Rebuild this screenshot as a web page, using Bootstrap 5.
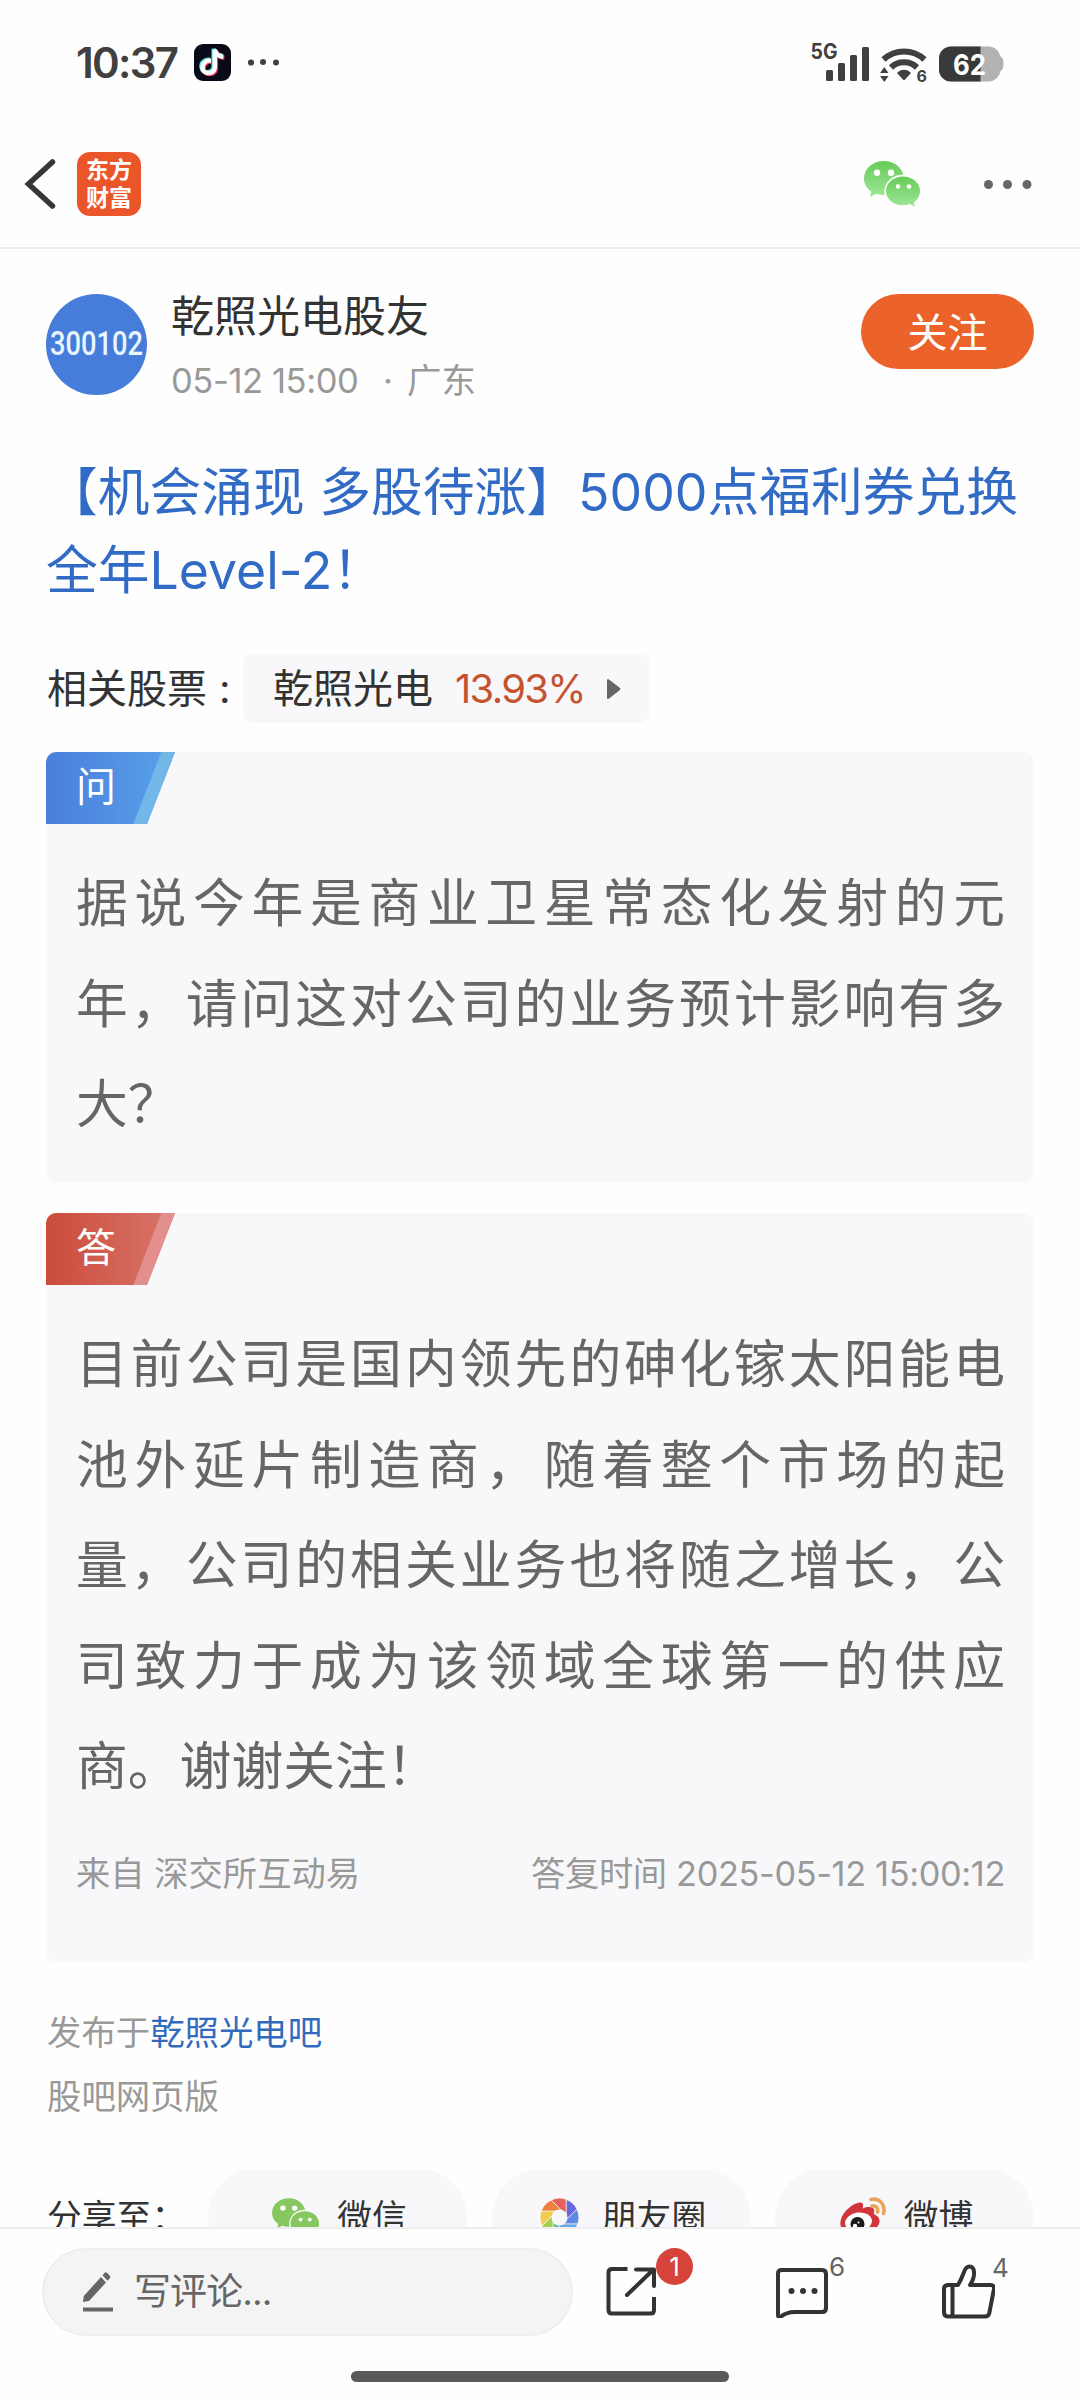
<!DOCTYPE html>
<html lang="zh-CN">
<head>
<meta charset="utf-8">
<meta name="viewport" content="width=device-width, initial-scale=1">
<title>乾照光电吧</title>
<link rel="stylesheet" href="https://cdn.jsdelivr.net/npm/bootstrap@5.3.0/dist/css/bootstrap.min.css">
<style>
  body { background: #fefefe; color: #333; font-family: Inter, "Noto Sans CJK SC", sans-serif; font-size: 34.5px; }
  svg { display: block; flex: none; }
  .screen { width: 1080px; height: 2400px; }
  .statusbar { height: 120px; padding: 6px 76px 0 76px; color: #404040; }
  .clock { font-size: 42px; font-weight: 600; line-height: 50px; width: 118px; letter-spacing: -1.7px; white-space: nowrap; }
  .topnav { height: 129px; border-bottom: 2px solid #eee; padding: 0 46px 0 24px; }
  .applogo { width: 64px; height: 64px; margin-left: 21px; border-radius: 13px; background: #eb552a; color: #fff; font-size: 23px; font-weight: 700; line-height: 28px; padding-top: 4px; }
  .feed { padding: 45px 46px 0; min-height: 0; }
  .author { height: 101px; }
  .author-text { margin: -3px 0 0 24px; }
  .author-name { font-size: 43px; line-height: 50px; }
  .author-meta { font-size: 34.5px; line-height: 50px; margin-top: 15px; color: #999; white-space: pre; }
  .author-meta .when { display: inline-block; width: 212px; letter-spacing: -.4px; }
  .author-meta .place { margin-left: 14px; }
  .follow { width: 173px; height: 75px; border-radius: 38px; background: #ec622b; color: #fff; font-size: 40px; line-height: 77px; border: 0; padding: 0; }
  .headline { font-size: 51.75px; line-height: 78px; margin: 58px 0 0; font-weight: 400; color: #326bc6; white-space: nowrap; }
  .stocks { margin-top: 45px; height: 69px; font-size: 40px; line-height: 69px; white-space: nowrap; padding-left: 1px; }
  .stock-label { width: 196px; }
  .stock-label span { margin-left: 12px; }
  .chip { width: 407px; border-radius: 10px; background: #f8f8fa; padding-left: 30px; }
  .gain { color: #c55330; letter-spacing: -1.7px; width: 128px; margin-left: 22px; }
  .qa { background: #f8f8fb; border-radius: 10px; overflow: hidden; }
  .qa-ask { margin-top: 29px; height: 431px; }
  .qa-answer { margin-top: 30px; height: 749px; }
  .qa-tag { width: 129px; height: 72px; line-height: 70px; padding-left: 30px; color: #fff; font-size: 40px; clip-path: polygon(0 0, 129px 0, 101px 72px, 0 72px); }
  .qa-ask .qa-tag { background: linear-gradient(111.25deg, transparent 0 107px, #73b7e9 108px), linear-gradient(90deg, #497edb, #58a2ea); }
  .qa-answer .qa-tag { background: linear-gradient(111.25deg, transparent 0 107px, #e38f8d 108px), linear-gradient(90deg, #cb4c3b, #d9756b); }
  .qa-body { margin: 29px 29px 0 30px; font-size: 51.8px; line-height: 100.6px; text-align: justify; color: #666; }
  .qa-source { margin: 32px 29px 0 30px; line-height: 50px; color: #999; font-size: 34.3px; white-space: nowrap; }
  .qa-source .stamp { letter-spacing: -.35px; }
  .origin { margin-top: 39px; line-height: 64px; color: #999; font-size: 34.4px; padding-left: 1px; }
  .origin a { color: #326bbd; text-decoration: none; }
  .share { margin-top: 40px; height: 96px; line-height: 96px; font-size: 34.8px; padding-left: 1px; white-space: nowrap; }
  .share-label { width: 161px; }
  .share-pill { width: 259px; border-radius: 48px; background: #f8f8fb; padding-left: 4px; }
  .share-pill + .share-pill { margin-left: 24.5px; }
  .actionbar { height: 173px; border-top: 2px solid #eee; background: #fefefe; flex: none; }
  .actions { height: 88px; margin: 19px 0 0 42px; }
  .reply { width: 531px; height: 88px; border-radius: 44px; background: #f4f4f4; border: 2px solid #eee; color: #666; font-size: 37px; padding-left: 38px; }
  .act { width: 52px; margin-bottom: 3px; }
  .bubble { position: absolute; left: 51px; top: -17px; width: 37px; height: 37px; border-radius: 50%; background: #d5433a; color: #fff; font-size: 26px; line-height: 37px; text-align: center; }
  .tally { position: absolute; font-size: 26px; line-height: 28px; color: #666; }
  .homebar { width: 378px; height: 11px; border-radius: 6px; background: #595959; margin: 35px 0 0 351px; }
</style>
</head>
<body>
<svg width="0" height="0" class="position-absolute">
  <defs>
    <linearGradient id="wx" x1="0" y1="0" x2="0" y2="1"><stop offset="0" stop-color="#65cb57"/><stop offset="1" stop-color="#a0e799"/></linearGradient>
    <symbol id="wechat" viewBox="0 0 56 46">
      <path d="M20 0C9 0 0 7.500 0 17.500c0 5.500 2.800 10 7.400 13.200L5.800 36l6.500-3.200c2.500.8 5 1.200 8.300 1.100C19 22 28 13.500 39.500 13.800 37 5.500 29.500 0 20 0z"/>
      <path d="M39 15.500c-9.500 0-17 6.500-17 14.500s7.500 14.300 17 14.300c2.600 0 5-.4 7-1.200L51 46l-1.300-4.600C53.600 38.700 56 34.700 56 30c0-8-7.500-14.500-17-14.500z"/>
      <g fill="#fff"><circle cx="13" cy="11.800" r="3.200"/><circle cx="27" cy="11.800" r="3.200"/><circle cx="34" cy="25.500" r="2.300"/><circle cx="45" cy="25.500" r="2.300"/></g>
    </symbol>
  </defs>
</svg>

<div class="screen d-flex flex-column overflow-hidden">
  <header class="statusbar d-flex align-items-center flex-shrink-0">
    <div class="clock">10:37</div>
    <svg width="86" height="38" viewBox="0 0 86 38">
      <rect width="37" height="37" rx="9" fill="#080a17"/>
      <g fill="none" stroke-width="4.400">
        <path d="M16.800 16.500c-5.500-.6-9 3-8.500 7.500.8 6.700 12 6.600 12.200-.8V5.500c.8 4 4 6.600 8.500 7" stroke="#5de4e4" transform="translate(-.8 -.8)"/>
        <path d="M16.800 16.500c-5.500-.6-9 3-8.500 7.500.8 6.700 12 6.600 12.200-.8V5.500c.8 4 4 6.600 8.500 7" stroke="#ee3a5b" transform="translate(1.400 1.200)"/>
        <path d="M16.800 16.500c-5.500-.6-9 3-8.500 7.500.8 6.700 12 6.600 12.200-.8V5.500c.8 4 4 6.600 8.500 7" stroke="#fff" transform="translate(.3 .2)"/>
      </g>
      <g fill="#404040"><circle cx="57" cy="18.500" r="3.100"/><circle cx="69" cy="18" r="3"/><circle cx="82" cy="18.500" r="3"/></g>
    </svg>
    <svg class="ms-auto" width="198" height="44" viewBox="806 40 198 44" fill="#404040">
      <text x="810.500" y="57.500" font-size="21" font-weight="700" textLength="27" lengthAdjust="spacingAndGlyphs">5G</text>
      <rect x="826" y="69" width="7" height="11" rx="1.500"/><rect x="838" y="62" width="7" height="18" rx="1.500"/><rect x="850" y="54" width="7" height="26" rx="1.500"/><rect x="862" y="46" width="7" height="34" rx="1.500"/>
      <g fill="none" stroke="#404040" stroke-width="6"><path d="M883.500 58.500a30 30 0 0 1 41 0"/><path d="M891 66.500a19 19 0 0 1 26 0"/></g>
      <path d="M897 72a9 9 0 0 1 14 0l-6 6.500q-1 1-2 0zM884.300 66l4.200 6h-8.400zM884.300 81l4.200-6h-8.400z"/>
      <text x="916.500" y="81" font-size="16" font-weight="700">6</text>
      <path d="M951 45.500h37.500a12 12 0 0 1 12 10c4 .5 4 13.500 0 14.500a12 12 0 0 1-12 10.500H951a12 12 0 0 1-12-12v-11a12 12 0 0 1 12-12z" fill="#b2b2b2"/>
      <path d="M951 45.500h29.500v35H951a12 12 0 0 1-12-12v-11a12 12 0 0 1 12-12z" fill="#393939"/>
      <text x="953" y="73.500" font-size="29" font-weight="700" fill="#fff" textLength="33" lengthAdjust="spacingAndGlyphs">62</text>
    </svg>
  </header>

  <nav class="topnav d-flex align-items-center flex-shrink-0">
    <svg width="32" height="52" viewBox="0 0 32 52" fill="none" stroke="#363636" stroke-width="5.500" stroke-linecap="round"><path d="M28.500 4 4.500 26l24 22"/></svg>
    <div class="applogo text-center">东方<br>财富</div>
    <svg class="ms-auto" width="56" height="46" fill="url(#wx)"><use href="#wechat"/></svg>
    <svg width="50" height="12" viewBox="0 0 50 12" fill="#666" style="margin-left:64px"><circle cx="4.500" cy="6.500" r="4.500"/><circle cx="23.500" cy="6.500" r="4.500"/><circle cx="43" cy="6.500" r="4.500"/></svg>
  </nav>

  <main class="feed flex-grow-1 overflow-hidden">
    <section class="author d-flex">
      <svg width="101" height="101"><circle cx="50.500" cy="50.500" r="50.500" fill="#467dda"/><text x="4" y="61" font-family="Roboto" font-size="33.500" font-weight="500" fill="#e8f6ff" textLength="93" lengthAdjust="spacingAndGlyphs">300102</text></svg>
      <div class="author-text">
        <div class="author-name">乾照光电股友</div>
        <div class="author-meta"><span class="when">05-12 15:00</span>·<span class="place">广东</span></div>
      </div>
      <button class="follow btn ms-auto">关注</button>
    </section>

    <h1 class="headline">【机会涌现 多股待涨】5000点福利券兑换<br>全年Level-2！</h1>

    <section class="stocks d-flex">
      <div class="stock-label">相关股票<span>:</span></div>
      <div class="chip d-flex align-items-center">
        <span>乾照光电</span><span class="gain">13.93%</span>
        <svg class="ms-4" width="14" height="22" viewBox="0 0 14 22"><path d="M0 2.500Q0 0 2 1.500L13 10q1 1 0 2L2 20.500Q0 22 0 19.500z" fill="#666"/></svg>
      </div>
    </section>

    <article class="qa qa-ask">
      <div class="qa-tag">问</div>
      <p class="qa-body">据说今年是商业卫星常态化发射的元年，请问这对公司的业务预计影响有多大？</p>
    </article>

    <article class="qa qa-answer">
      <div class="qa-tag">答</div>
      <p class="qa-body">目前公司是国内领先的砷化镓太阳能电池外延片制造商，随着整个市场的起量，公司的相关业务也将随之增长，公司致力于成为该领域全球第一的供应商。谢谢关注！</p>
      <div class="qa-source d-flex justify-content-between"><span>来自 深交所互动易</span><span class="stamp">答复时间 2025-05-12 15:00:12</span></div>
    </article>

    <div class="origin">发布于<a href="#">乾照光电吧</a><br>股吧网页版</div>

    <section class="share d-flex">
      <div class="share-label">分享至：</div>
      <div class="share-pill d-flex align-items-center justify-content-center">
        <svg width="47" height="39" fill="#87c75f"><use href="#wechat"/></svg><span style="margin-left:18px">微信</span>
      </div>
      <div class="share-pill d-flex align-items-center justify-content-center">
        <svg width="39" height="39" viewBox="-19.500 -19.500 39 39" stroke="#f8f8fb" stroke-width=".7">
          <path d="M6.500 -18.200A19.300 19.300 0 0 1 17.500 -8.200L6.500 3z" fill="#6a6ade"/>
          <path d="M6.500 -18.200A19.300 19.300 0 0 1 17.500 -8.200L6.500 3z" fill="#5f87e4" transform="rotate(45)"/>
          <path d="M6.500 -18.200A19.300 19.300 0 0 1 17.500 -8.200L6.500 3z" fill="#65a9e3" transform="rotate(90)"/>
          <path d="M6.500 -18.200A19.300 19.300 0 0 1 17.500 -8.200L6.500 3z" fill="#63c6a0" transform="rotate(135)"/>
          <path d="M6.500 -18.200A19.300 19.300 0 0 1 17.500 -8.200L6.500 3z" fill="#a3cf55" transform="rotate(180)"/>
          <path d="M6.500 -18.200A19.300 19.300 0 0 1 17.500 -8.200L6.500 3z" fill="#f2cc4e" transform="rotate(225)"/>
          <path d="M6.500 -18.200A19.300 19.300 0 0 1 17.500 -8.200L6.500 3z" fill="#ec803c" transform="rotate(270)"/>
          <path d="M6.500 -18.200A19.300 19.300 0 0 1 17.500 -8.200L6.500 3z" fill="#e56059" transform="rotate(315)"/>
          <circle r="8" fill="#f8f8fb" stroke="none"/>
        </svg><span style="margin-left:23px">朋友圈</span>
      </div>
      <div class="share-pill d-flex align-items-center justify-content-center">
        <svg width="46" height="40" viewBox="0 0 46 40">
          <path d="M18 6c5-1.500 6 1.500 4.500 5.500 6-2.500 13-2 11.500 3.500-.4 1.600 0 2.300 1.500 3 6 2.800 5 10-1 14.500-9 7-25 6.500-31.500.5C-3 27 2 16 10 10c2.500-2 5-3.400 8-4z" fill="#d2353a"/>
          <ellipse cx="18.500" cy="25" rx="13.500" ry="9.500" fill="#fff" transform="rotate(-8 18.500 25)"/>
          <circle cx="17.500" cy="27" r="7" fill="#1b1b1b"/><circle cx="15" cy="29" r="2.200" fill="#fff"/><circle cx="18.500" cy="25.500" r="1" fill="#fff"/>
          <path d="M31 2.500c8-2 15 5 12.500 14M32 9c4-.6 6.500 2 5.500 6" fill="none" stroke="#e9a45c" stroke-width="3.600" stroke-linecap="round"/>
        </svg><span style="margin-left:18px">微博</span>
      </div>
    </section>
  </main>

  <footer class="actionbar">
    <div class="actions d-flex align-items-center">
      <div class="reply d-flex align-items-center">
        <svg width="32" height="42" viewBox="0 0 32 42" fill="#666"><path d="M1 31 1.800 25 19 6l5 5.500L7 30zM20.500 4.200 23 1.500q1-.8 2 .2l3 3.300q.8 1 0 2L25.500 9.700zM1 36.500h30v4H1z"/></svg>
        <span style="margin-left:20px;letter-spacing:-.9px">写评论...</span>
      </div>
      <div class="act position-relative" style="margin-left:32px">
        <svg width="52" height="52" viewBox="0 0 52 52" fill="none" stroke="#333" stroke-width="4" stroke-linecap="round" stroke-linejoin="round"><path d="M22.500 4H7Q3.500 4 3.500 7.500V45q0 3.500 3.500 3.500h39q3 0 3-3.500V32" stroke-linecap="butt"/><path d="M31 4.500h18V21M48 5 22 30"/></svg>
        <span class="bubble">1</span>
      </div>
      <div class="act position-relative" style="margin-left:118px">
        <svg width="54" height="54" viewBox="0 0 54 54" fill="none" stroke="#333" stroke-width="4" stroke-linecap="round" stroke-linejoin="round"><path d="M6.500 6H47q4 0 4 4v34q0 4-4 4H20c-6 0-10 1-14.500 5Q3 54 3 50.500V9.500Q3 6 6.500 6z"/><g fill="#333" stroke="none"><circle cx="16.500" cy="27" r="3"/><circle cx="28" cy="27" r="3"/><circle cx="39.500" cy="27" r="3"/></g></svg>
        <span class="tally" style="left:54px;top:-11px">6</span>
      </div>
      <div class="act position-relative" style="margin-left:114px">
        <svg width="54" height="56" viewBox="0 0 54 56" fill="none" stroke="#333" stroke-width="4" stroke-linejoin="round"><path d="M17 22H7.500Q3 22 3 26v23q0 4.500 4 4.500h37q3.500 0 4.300-3.500L53 26q.5-4-3.500-4H29c6-9 5-18.500-.5-18.500-3 0-4.500 2.500-5.500 5.500-1.800 5-3 8-6 13zM11.500 22v31"/></svg>
        <span class="tally" style="left:51px;top:-9px">4</span>
      </div>
    </div>
    <div class="homebar"></div>
  </footer>
</div>
<script src="https://cdn.jsdelivr.net/npm/bootstrap@5.3.0/dist/js/bootstrap.bundle.min.js"></script>
</body>
</html>
